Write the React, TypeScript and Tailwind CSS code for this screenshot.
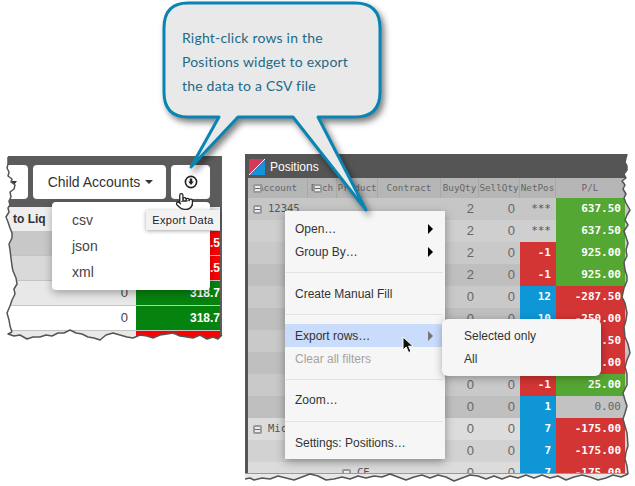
import { Pointer } from 'lucide-react'

const ROWS = [
  { bg: 'bg-[#c6c6c6]', label: '12345', boxAt: 'pl-[5px]', buy: '2', sell: '0', net: '***', netCls: 'text-[#555]', pl: '637.50', plCls: 'bg-[#55a733] text-white font-bold' },
  { bg: 'bg-[#cfcfcf]', buy: '2', sell: '0', net: '***', netCls: 'text-[#555]', pl: '637.50', plCls: 'bg-[#55a733] text-white font-bold' },
  { bg: 'bg-[#c9c9c9]', buy: '2', sell: '0', net: '-1', netCls: 'bg-[#d33434] text-white font-bold', pl: '925.00', plCls: 'bg-[#55a733] text-white font-bold' },
  { bg: 'bg-[#bfbfbf]', buy: '2', sell: '0', net: '-1', netCls: 'bg-[#d33434] text-white font-bold', pl: '925.00', plCls: 'bg-[#55a733] text-white font-bold' },
  { bg: 'bg-[#c9c9c9]', buy: '0', sell: '0', net: '12', netCls: 'bg-[#0f96d6] text-white font-bold', pl: '-287.50', plCls: 'bg-[#d33434] text-white font-bold' },
  { bg: 'bg-[#bfbfbf]', buy: '0', sell: '0', net: '10', netCls: 'bg-[#0f96d6] text-white font-bold', pl: '-250.00', plCls: 'bg-[#d33434] text-white font-bold' },
  { bg: 'bg-[#c9c9c9]', buy: '', sell: '', net: '', netCls: 'bg-[#0f96d6] text-white font-bold', pl: '-262.50', plCls: 'bg-[#d33434] text-white font-bold' },
  { bg: 'bg-[#bfbfbf]', buy: '', sell: '', net: '', netCls: 'bg-[#0f96d6] text-white font-bold', pl: '-200.00', plCls: 'bg-[#d33434] text-white font-bold' },
  { bg: 'bg-[#c9c9c9]', buy: '0', sell: '0', net: '-1', netCls: 'bg-[#d33434] text-white font-bold', pl: '25.00', plCls: 'bg-[#55a733] text-white font-bold' },
  { bg: 'bg-[#bfbfbf]', buy: '0', sell: '0', net: '1', netCls: 'bg-[#0f96d6] text-white font-bold', pl: '0.00', plCls: 'bg-[#c2c2c2] text-[#666]' },
  { bg: 'bg-[#dcdcdc]', label: 'Mic', boxAt: 'pl-[5px]', buy: '0', sell: '0', net: '7', netCls: 'bg-[#0f96d6] text-white font-bold', pl: '-175.00', plCls: 'bg-[#d33434] text-white font-bold' },
  { bg: 'bg-[#d2d2d2]', buy: '0', sell: '0', net: '7', netCls: 'bg-[#0f96d6] text-white font-bold', pl: '-175.00', plCls: 'bg-[#d33434] text-white font-bold' },
  { bg: 'bg-[#dcdcdc]', label: 'CE', boxAt: 'pl-[94px]', buy: '0', sell: '0', net: '7', netCls: 'bg-[#0f96d6] text-white font-bold', pl: '-175.00', plCls: 'bg-[#d33434] text-white font-bold' },
]

const HEADERS = ['Account', 'Exch', 'Product', 'Contract', 'BuyQty', 'SellQty', 'NetPos', 'P/L']

const LEFT_ROWS = [
  { bg: 'bg-[#c8c8c8]', value: '', cell: 'bg-[#ff0000]', pl: '318.50' },
  { bg: 'bg-[#d9d9d9]', value: '', cell: 'bg-[#ff0000]', pl: '318.50' },
  { bg: 'bg-[#e8e8e8]', value: '0', cell: 'bg-[#06830f]', pl: '318.75' },
  { bg: 'bg-white', value: '0', cell: 'bg-[#06830f]', pl: '318.75' },
]

const TORN_LEFT = '8,157 8,164 7,168 9,172 8,176 12,179 11,182 15,185 14,189 10,192 11,197 9,201 10,205 8,208 9,212 6,217 8,222 10,228 12,233 12,238 9,244 10,250 11,258 12,266 13,271 16,278 17,284 14,289 15,294 12,300 10,306 7,313 9,320 10,326 12,332'
const TORN_LEFT_BOTTOM = '12,332 8,334 14,336 20,335 27,339 33,337 40,337 46,335 52,336 58,333 64,333 70,330 76,333 82,334 88,337 94,338 100,340 106,335 113,333 120,335 127,337 133,338 140,335 147,336 153,338 160,335 167,334 173,333 180,336 187,337 193,338 200,335 207,339 213,337 218,339 222,335'
const TORN_RIGHT = '627,154 626,158 625,162 627,166 627,170 624,174 626,178 622,181 625,185 623,189 626,194 624,198 626,203 630,210 627,215 625,220 628,225 624,231 626,237 628,243 626,250 627,256 624,262 625,270 627,276 627,281 624,288 622,297 625,303 627,313 626,320 624,327 625,337 628,344 630,353 627,360 625,367 627,374 627,385 623,393 625,400 627,406 625,413 623,419 625,426 627,433 628,446 626,452 625,459 627,466 628,474'
const TORN_BOTTOM = '628,474 621,477 613,475 606,478 598,480 590,477 582,475 574,477 566,480 558,476 550,478 542,475 534,478 526,475 518,478 510,476 502,479 494,476 486,479 478,476 470,475 462,478 454,481 446,477 438,475 430,478 422,475 414,477 406,480 398,477 390,474 382,477 374,476 366,478 358,476 350,479 342,477 334,479 326,480 318,476 310,474 302,477 294,480 286,478 278,476 270,479 262,478 254,480 250,478 245,479'

function MinusBox() {
  return (
    <span className="flex h-[9px] w-[9px] shrink-0 items-center justify-center rounded-[2px] border-2 border-[#9a9a9a] bg-[#ececec]">
      <span className="h-px w-[5px] bg-[#666]" />
    </span>
  )
}

function MenuRow({ label, arrow, active, disabled }: { label: string; arrow?: 'black' | 'gray'; active?: boolean; disabled?: boolean }) {
  return (
    <div className={`mr-[3px] flex h-[23px] items-center pl-[10px] ${active ? 'bg-[#c9dcfb]' : ''} ${disabled ? 'text-[#a3a3a3]' : 'text-[#333]'}`}>
      <span className="flex-1">{label}</span>
      {arrow === 'black' && <span className="mr-[9px] h-0 w-0 border-y-[5px] border-l-[5px] border-y-transparent border-l-black" />}
      {arrow === 'gray' && <span className="mr-[9px] h-0 w-0 border-y-[5px] border-l-[5px] border-y-transparent border-l-[#777]" />}
    </div>
  )
}

function MenuSep({ h }: { h: string }) {
  return (
    <div className={`mr-[2px] ml-px flex items-center ${h}`}>
      <div className="h-px w-full bg-[#e2e2e2]" />
    </div>
  )
}

export default function App() {
  return (
    <div className="relative flex h-[486px] w-[635px] items-start overflow-hidden bg-white pt-[154px] pl-2 font-['Liberation_Sans',sans-serif]">
      {/* left crop: toolbar + export menu */}
      <div className="relative mt-[2px] h-[184px] w-[214px] shrink-0 bg-[#5c5c5c] pr-[2px]">
        <div className="flex h-[51px] gap-[5px] pt-[9px] pr-[10px]">
          <div className="h-[34px] w-[20px] rounded-r-[4px] bg-white pl-[3px] pt-[16px]">
            <span className="block h-0 w-0 border-x-[3px] border-t-[4px] border-x-transparent border-t-[#333]" />
          </div>
          <div className="flex h-[34px] w-[133px] items-center justify-center gap-[5px] rounded-[4px] bg-white pl-[2px] text-[14px] text-[#333]">
            Child Accounts
            <span className="h-0 w-0 border-x-[4px] border-t-[4px] border-x-transparent border-t-[#333]" />
          </div>
          <div className="flex h-[34px] w-[39px] items-center justify-center rounded-[4px] bg-white">
            <svg width="14" height="14" viewBox="0 0 14 14">
              <circle cx="7" cy="7" r="5.6" fill="none" stroke="#222" strokeWidth="1.6" />
              <path d="M5.8 3.6h2.4v3h1.6L7 10 4.2 6.6h1.6z" fill="#222" />
            </svg>
          </div>
        </div>
        <div className="flex h-[24px] items-center bg-[#eeeeee] pl-[5px] text-[12px] font-bold text-[#333]">to Liq</div>
        {LEFT_ROWS.map((r, i) => (
          <div key={i} className={`flex h-[25px] border-b border-[#c4c4c4] ${r.bg}`}>
            <div className="flex w-[128px] items-center justify-end pr-[8px] text-[13px] text-[#444]">{r.value}</div>
            <div className={`flex w-[84px] items-center overflow-hidden pl-[54px] text-[12px] font-bold whitespace-nowrap text-white ${r.cell}`}>{r.pl}</div>
          </div>
        ))}
        <div className="flex h-[8px] bg-[#e8e8e8]">
          <div className="w-[128px]" />
          <div className="w-[84px] bg-[#ff0000]" />
        </div>

        {/* export dropdown */}
        <div className="absolute top-[46px] left-[44px] flex h-[88px] w-[158px] flex-col justify-center rounded-[4px] bg-white pl-[20px] text-[14px] leading-[26px] text-[#444] shadow-[0_3px_8px_rgba(0,0,0,0.3)]">
          <div>csv</div>
          <div>json</div>
          <div>xml</div>
        </div>
        <div className="absolute top-[54px] left-[138px] flex h-[20px] w-[74px] items-center justify-center bg-[#f2f2f2] text-[11px] tracking-[0.3px] text-[#222] shadow-[0_1px_4px_rgba(0,0,0,0.35)]">
          Export Data
        </div>
      </div>

      {/* right crop: Positions widget */}
      <div className="relative ml-[23px] h-[326px] w-[385px] shrink-0 bg-[#555555] pl-[3px]">
        <div className="flex h-[24px] items-center gap-[5px] pt-[2px] pl-px">
          <svg width="16" height="16" viewBox="0 0 16 16">
            <rect width="16" height="16" fill="#d23a58" />
            <path d="M16 0.5V16H1z" fill="#1493d8" />
            <path d="M16 0L0 16" stroke="#fff" strokeWidth="1" />
          </svg>
          <span className="text-[12px] text-white">Positions</span>
        </div>
        <div className="grid h-[20px] grid-cols-[60px_29px_41px_63px_38px_41px_36px_69px] bg-[#b6b6b6] font-['DejaVu_Sans_Mono',monospace] text-[9.3px] text-[#666]">
          {HEADERS.map((h) => (
            <div key={h} className="relative flex items-center justify-center border-r border-[#a8a8a8] whitespace-nowrap">
              {h}
              {h === 'Account' && <span className="absolute top-[6px] left-[5px]"><MinusBox /></span>}
              {h === 'Exch' && <span className="absolute top-[6px] left-[5px]"><MinusBox /></span>}
            </div>
          ))}
        </div>
        <div className="h-[275px] overflow-hidden font-['DejaVu_Sans_Mono',monospace] text-[#555]">
          {ROWS.map((r, i) => (
            <div key={i} className={`grid h-[22px] grid-cols-[193px_38px_41px_36px_69px] items-stretch ${r.bg}`}>
              <div className={`flex items-center gap-[6px] text-[10.5px] ${r.boxAt ?? ''}`}>
                {r.label && <MinusBox />}
                {r.label}
              </div>
              <div className="flex items-center justify-end pr-[5px] font-['Liberation_Sans',sans-serif] text-[13px] text-[#666]">{r.buy}</div>
              <div className="flex items-center justify-end pr-[5px] font-['Liberation_Sans',sans-serif] text-[13px] text-[#666]">{r.sell}</div>
              <div className={`flex items-center justify-end pr-[5px] text-[11px] ${r.netCls}`}>{r.net}</div>
              <div className={`flex items-center justify-end pr-[4px] text-[11px] ${r.plCls}`}>{r.pl}</div>
            </div>
          ))}
        </div>
        <div className="-ml-[3px] h-[7px] border-t border-[#999] bg-[#e8e8e8]" />

        {/* context menu */}
        <div className="absolute top-[57px] left-[40px] h-[248px] w-[160px] bg-[#f6f6f6] pt-[6px] text-[12px] shadow-[0_3px_9px_rgba(0,0,0,0.35)]">
          <MenuRow label="Open…" arrow="black" />
          <MenuRow label="Group By…" arrow="black" />
          <MenuSep h="h-[19px]" />
          <MenuRow label="Create Manual Fill" />
          <MenuSep h="h-[19px]" />
          <MenuRow label="Export rows…" arrow="gray" active />
          <MenuRow label="Clear all filters" disabled />
          <MenuSep h="h-[18px]" />
          <MenuRow label="Zoom…" />
          <MenuSep h="h-[20px]" />
          <MenuRow label="Settings: Positions…" />
        </div>
        <div className="absolute top-[165px] left-[197px] flex h-[57px] w-[159px] flex-col justify-center rounded-[6px] bg-[#f6f6f6] pl-[22px] text-[12px] leading-[23px] text-[#333] shadow-[0_2px_8px_rgba(0,0,0,0.3)]">
          <div>Selected only</div>
          <div>All</div>
        </div>
      </div>

      {/* torn screenshot edges */}
      <svg className="absolute top-0 left-0" width="635" height="486" viewBox="0 0 635 486">
        <path fillRule="evenodd" fill="#fff" d={`M0 150H235V350H0Z M${TORN_LEFT} ${TORN_LEFT_BOTTOM} 222,156 8,156Z`} />
        <path fill="#fff" d={`M${TORN_RIGHT} 635,474 635,150 627,150Z`} />
        <path fill="#fff" d={`M${TORN_BOTTOM} 240,486 635,486 635,474Z`} />
        <polyline points={TORN_LEFT} fill="none" stroke="#555" strokeWidth="1.5" strokeLinejoin="round" />
        <polyline points={TORN_LEFT_BOTTOM} fill="none" stroke="#555" strokeWidth="1.5" strokeLinejoin="round" />
        <polyline points={TORN_RIGHT} fill="none" stroke="#555" strokeWidth="1.5" strokeLinejoin="round" />
        <polyline points={TORN_BOTTOM} fill="none" stroke="#555" strokeWidth="1.5" strokeLinejoin="round" />
      </svg>

      {/* callout bubble */}
      <svg className="absolute top-0 left-0 drop-shadow-[3px_4px_3px_rgba(0,0,0,0.5)]" width="635" height="486" viewBox="0 0 635 486">
        <path
          d="M188 3H355Q380 3 380 28V92Q380 117 355 117H318L366 210L293 117H238L191 167L219 117H188Q164 117 164 92V28Q164 3 188 3Z"
          fill="#e9e9e9"
          stroke="#0a85b3"
          strokeWidth="3"
          strokeLinejoin="round"
        />
      </svg>
      <div className="absolute top-[26px] left-[182px] font-['Lato',sans-serif] text-[14px] leading-[24px] tracking-[0.2px] whitespace-nowrap text-[#1c6a87]">
        <div>Right-click rows in the</div>
        <div>Positions widget to export</div>
        <div>the data to a CSV file</div>
      </div>

      {/* cursors */}
      <Pointer className="absolute top-[192px] left-[175px]" size={19} fill="#fff" stroke="#222" strokeWidth={1.6} />
      <svg className="absolute top-[336px] left-[402px]" width="13" height="18" viewBox="0 0 13 18">
        <path d="M1 1V14L4.2 11L6.6 16.5L9 15.4L6.6 10.2H11Z" fill="#111" stroke="#fff" strokeWidth="1" />
      </svg>
    </div>
  )
}
